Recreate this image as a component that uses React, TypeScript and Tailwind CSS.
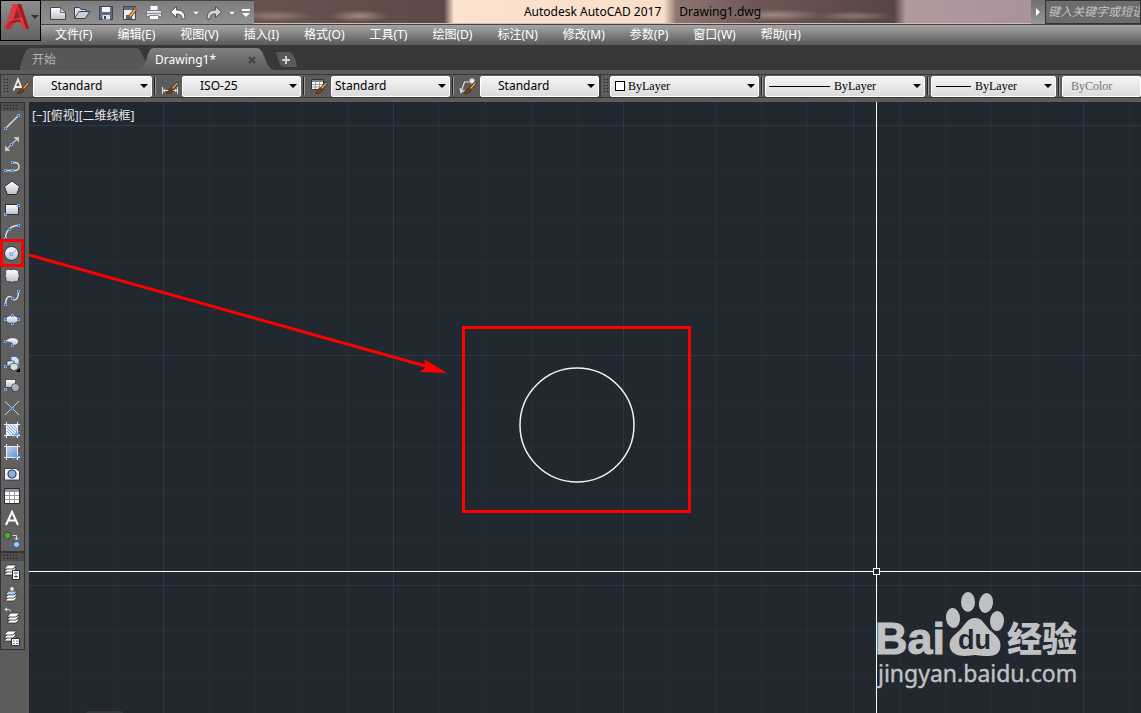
import type { ReactNode } from "react";

const BLUE = "#6ea8f5";
const INK = "#2c2c2c";

type Tool = {
  label: string;
  icon: ReactNode;
  highlighted?: boolean;
};

type StyleSelectProps = {
  label: string;
  value: string;
  className: string;
  selectClassName?: string;
  children?: ReactNode;
  disabled?: boolean;
};

// Small square grip point used by most of the draw icons
function Node({ x, y }: { x: number; y: number }) {
  return <rect x={x - 1} y={y - 1} width="2" height="2" fill="#27406b" stroke={BLUE} />;
}

function Icon({ children, className = "h-4 w-4" }: { children: ReactNode; className?: string }) {
  return (
    <svg viewBox="0 0 16 16" className={`shrink-0 overflow-visible ${className}`} fill="none" aria-hidden="true">
      {children}
    </svg>
  );
}

function Sheets({ x = 0, y = 0, top = "#fff" }: { x?: number; y?: number; top?: string }) {
  return (
    <g transform={`translate(${x} ${y})`} stroke={INK} strokeWidth=".8">
      <path d="M0 12 3.500 8H12.500L9 12Z" fill="#fff" />
      <path d="M0 9 3.500 5H12.500L9 9Z" fill="#fff" />
      <path d="M0 6 3.500 2H12.500L9 6Z" fill={top} />
    </g>
  );
}

function Brush() {
  return (
    <g>
      <path d="m10.500 10.500 4.500-5" stroke="#3a2a1a" strokeWidth="3" strokeLinecap="round" />
      <path d="m10.500 10.500 4.500-5" stroke="#f3a63c" strokeWidth="1.600" strokeLinecap="round" />
      <path d="M4 15c2 0 2-2 3-4 1-1.500 4-1 4 1s-2 3.500-4.500 3.500Z" fill="#7a3d12" stroke="#4a240a" strokeWidth=".600" />
    </g>
  );
}

const drawTools: Tool[] = [
  { label: "直线", icon: <><path d="M2 14 14 2" stroke="#e6e6e6" strokeWidth="1.200" /><Node x={1.5} y={14.5} /><Node x={14.5} y={1.5} /></> },
  { label: "构造线", icon: <><path d="M3 13 13 3" stroke="#c4c4c4" strokeWidth="1.200" /><path d="M9.500 1H15v5.500ZM1 9.500V15h5.500Z" fill="#c9c9c9" /><Node x={7.5} y={8.5} /></> },
  { label: "多段线", icon: <><path d="M2 12.500H11C16.500 12.500 16.500 4.500 10 4.500H9" stroke="#dcdcdc" strokeWidth="1.400" /><Node x={1.5} y={12.5} /><Node x={8.5} y={12.5} /><Node x={8.5} y={4.5} /></> },
  { label: "多边形", icon: <path d="M8 1 15.500 6.500 12.800 14.500H3.200L.500 6.500Z" fill="url(#metal)" stroke={INK} /> },
  { label: "矩形", icon: <><path d="M1.500 2.500h13v10h-13Z" fill="url(#metal)" stroke={INK} /><Node x={1.5} y={12.5} /><Node x={14.5} y={3.5} /></> },
  { label: "圆弧", icon: <><path d="M1.500 14C1.500 7 7 1.800 14 1.500" stroke="#dcdcdc" strokeWidth="1.400" /><Node x={1.5} y={14.5} /><Node x={5.5} y={5.5} /><Node x={14.5} y={1.5} /></> },
  { label: "圆", highlighted: true, icon: <><circle cx="7.500" cy="7.500" r="7" fill="url(#metal)" stroke={INK} /><path d="m8 8 4-4" stroke={BLUE} /><rect x="6" y="7" width="2.500" height="2.500" stroke={BLUE} /></> },
  { label: "修订云线", icon: <path d="M2.500 2C4 .800 6 1 7 2c2-1 4-1 5 0 2-.500 3.500 1.500 2.500 3.500 1 1.500 1 3 0 4.500.500 3-2 4.500-4 3.500-2 1-3.500 1-4.500 0-2.500 1-5-1-4-3.500C.800 8 1 6.500 2 5.500 1 4 1.200 3 2.500 2Z" fill="url(#metal)" stroke={INK} strokeWidth=".800" /> },
  { label: "样条曲线", icon: <><path d="M1.500 14C2 6 6 5 8 8s6 3 6.500-6" stroke="#e6e6e6" strokeWidth="1.400" /><Node x={1.5} y={14.5} /><Node x={8.5} y={8.5} /><Node x={14.5} y={1.5} /></> },
  { label: "椭圆", icon: <><ellipse cx="8" cy="7.500" rx="6.500" ry="4" fill="url(#metal)" stroke={INK} strokeWidth=".600" /><Node x={1.5} y={7.5} /><Node x={8.5} y={3.5} /><Node x={14.5} y={7.5} /><Node x={8.5} y={11.5} /></> },
  { label: "椭圆弧", icon: <><path d="M2 7.500C3 2.500 14.500 2.500 14.500 7.500c0 4-5 4-6.500 4V9L2 7.500Z" fill="url(#metal)" stroke={INK} strokeWidth=".600" /><Node x={1.5} y={7.5} /><Node x={8.5} y={11.5} /></> },
  { label: "插入块", icon: <><path d="M7 .500h5l3 3V12H7Z" fill="#cfe2f7" stroke="#3c6ba6" strokeWidth=".800" /><path d="M3 5h7v5H3Z" fill="url(#metal)" stroke={INK} strokeWidth=".700" /><path d="M6 8.500 10 7l4 1.500v4L10 15l-4-2.500Z" fill="#d9dde4" stroke={INK} strokeWidth=".700" /><path d="M16 12v4h-4Z" fill="#000" /><Node x={1.5} y={10.5} /></> },
  { label: "创建块", icon: <><path d="M1.500 1.500h10v8h-10Z" fill="url(#metal)" stroke={INK} strokeWidth=".700" /><circle cx="11.500" cy="9.500" r="4" fill="#b7bdc8" fillOpacity=".850" stroke={INK} strokeWidth=".700" /><Node x={1.5} y={11.5} /></> },
  { label: "点", icon: <><path d="M1 1.500 15 15M15 1 1 15" stroke="#cfcfcf" /><Node x={8.5} y={8.5} /></> },
  { label: "图案填充", icon: <><path d="M3 3h10v10H3Z" fill="#e6eefa" /><path d="M3 9l4 4M3 6l7 7M3 3l10 10M6 3l7 7M9 3l4 4" stroke="#6a94d0" strokeWidth=".800" /><path d="M0 2.500h16M0 13.500h16M2.500 0v16M13.500 0v16" stroke="#f0f0f0" /><path d="m8.500 16 7-7M12.500 8v7.500M8 12.500h8" stroke={BLUE} /></> },
  { label: "渐变色", icon: <><path d="M3 3h10v10H3Z" fill="url(#sky)" /><path d="M0 2.500h16M0 13.500h16M2.500 0v16M13.500 0v16" stroke="#f0f0f0" /><path d="m8.500 16 7-7M12.500 8v7.500M8 12.500h8" stroke={BLUE} /></> },
  { label: "面域", icon: <><path d="M.500 2.500H12l3.500 3v8.500H.500Z" fill="#eef0f3" stroke={INK} strokeWidth=".800" /><circle cx="8" cy="8" r="4" fill="#8fb1de" stroke="#25436f" strokeWidth="1.200" /></> },
  { label: "表格", icon: <><path d="M.500.500h15v15H.500Z" fill="#fff" stroke={INK} /><path d="M1 1h14v3H1Z" fill="#8a94a2" /><path d="M1 7.500h14M1 11.500h14M5.500 4v11M10.500 4v11" stroke="#9a9a9a" /></> },
  { label: "多行文字", icon: <path d="M2 15 8 2l6 13M4 10.500h8" stroke="#fff" strokeWidth="2" /> },
  { label: "添加选定对象", icon: <><circle cx="3.500" cy="3.500" r="3.300" fill="#55a63a" stroke="#24571a" /><path d="M8.500 3.500h4v4M10.500 6l2 2 2-2" stroke="#dcdcdc" /><circle cx="12.500" cy="12.500" r="3" fill="#9fcbf5" stroke="#2c5c94" /></> },
];

const layerTools: Tool[] = [
  { label: "图层特性管理器", icon: <><Sheets x={0} y={-1} /><path d="M8.500 6.500h7v9h-7Z" fill="#fff" stroke={INK} /><path d="M10 8h4v2h-4Z" fill={BLUE} /><path d="M10 12.500h4M12 11v3" stroke="#555" /></> },
  { label: "将对象的图层置为当前", icon: <><Sheets x={1} y={3} top="#a8cbf2" /><circle cx="8" cy="3" r="2.200" fill="#e6e6e6" stroke="#666" strokeWidth=".600" /></> },
  { label: "上一个图层", icon: <><Sheets x={3} y={3} /><path d="M1 1.500h3.500c1 0 2 .500 2 2M3 0 1 1.500 3 3.500" stroke="#e6e6e6" /></> },
  { label: "图层状态管理器", icon: <><Sheets x={0} y={-1} /><path d="M7.500 8.500h8v7h-8Z" fill="#fff" stroke={INK} /><path d="M9 11h2M12 11h2.500M9 13.500h2M12 13.500h2.500" stroke="#6a7fb0" /></> },
];

const menus = [
  "文件(F)", "编辑(E)", "视图(V)", "插入(I)", "格式(O)", "工具(T)",
  "绘图(D)", "标注(N)", "修改(M)", "参数(P)", "窗口(W)", "帮助(H)",
];

const quickTools: Tool[] = [
  { label: "新建", icon: <><path d="M.500 2.500h10l5 5v7H.500Z" fill="url(#metal)" stroke="#444" /><path d="M10.500 2.500v5h5Z" fill="#d0d4da" stroke="#555" strokeWidth=".800" /></> },
  { label: "打开", icon: <><path d="M.500 13V2.500h5L7 4.500h5v3" fill="#dfe3e8" stroke="#39424f" /><path d="m.500 13.500 4.500-7H16l-5 7Z" fill="#c8d0da" stroke="#39424f" /></> },
  { label: "保存", icon: <><path d="M1.500 1.500h13v13h-13Z" fill="#5e6b7c" stroke="#3b4450" /><path d="M4 2h8v5H4Z" fill="#f4f4f4" /><path d="M4.500 10H12v4.500H4.500Z" fill="#e2e5e9" /><path d="M6 11h2v3H6Z" fill="#3b4450" /></> },
  { label: "另存为", icon: <><path d="M1.500 1.500h12v13h-12Z" fill="#e9ebee" stroke="#3b4450" /><path d="M2 2h11v3H2Z" fill="#5e6b7c" /><path d="M4 10h6v4H4Z" fill="#59616c" /><path d="m8 11.500 6-8" stroke="#4a3517" strokeWidth="3.500" /><path d="m8 11.500 6-8" stroke="#f4b23f" strokeWidth="2" /><path d="m12.800 5 1.600-2" stroke="#d7563c" strokeWidth="2.500" /></> },
  { label: "打印", icon: <><path d="M4 .500h8V6H4Z" fill="#fff" stroke="#888" /><path d="M.500 5.500h15v6H.500Z" fill="#e9ebee" stroke="#777" /><path d="M1 8.500h14" stroke="#8c99a8" strokeWidth="1.500" /><path d="M3.500 10.500h9v4h-9Z" fill="#fff" stroke="#888" /></> },
  { label: "放弃", icon: <path d="M.500 7 6.500 1.500v3.500c6 0 8.500 3 8.500 9h-3c0-4-1.500-5-5.500-5v3.500Z" fill="#fafafa" stroke="#505050" /> },
];

// Caret shared by split buttons and drop-downs
function Caret({ className }: { className: string }) {
  return (
    <svg viewBox="0 0 8 4" className={`pointer-events-none h-1 w-2 shrink-0 ${className}`} fill="currentColor" aria-hidden="true">
      <path d="M0 0h8L4 4Z" />
    </svg>
  );
}

function StyleSelect({ label, value, className, selectClassName = "", children, disabled }: StyleSelectProps) {
  return (
    <div className={`flex h-[21px] items-center rounded-xs border border-white bg-linear-to-b from-[#f4f4f4] to-[#dcdcdc] ${className}`}>
      {children}
      <div className="relative flex h-full min-w-0 flex-1 items-center">
        <select aria-label={label} disabled={disabled} className={`h-full w-full appearance-none bg-transparent text-black outline-none disabled:text-[#777] ${selectClassName}`}>
          <option>{value}</option>
        </select>
        {!disabled && <Caret className="absolute right-[3px] text-black" />}
      </div>
    </div>
  );
}

function Separator() {
  return <div className="mx-0.5 h-4.5 w-0.5 border-l border-[#222] bg-[#9a9a9a]" />;
}

function Grip({ className }: { className: string }) {
  return <div className={`bg-[radial-gradient(#1e1e1e_1px,transparent_1px)] bg-[length:3px_3px] ${className}`} />;
}

function StyleIcon({ children }: { children: ReactNode }) {
  return (
    <div className="flex w-6 justify-center">
      <Icon>
        {children}
        <Brush />
      </Icon>
    </div>
  );
}

function TitleBar() {
  return (
    <div className="flex h-[25px] border-b border-[#444]">
      <div className="flex w-[213px] items-center border-t border-[#444] bg-linear-to-b from-[#7d7d7d] to-[#919191] pl-[5px]">
        {quickTools.map((tool) => (
          <button key={tool.label} aria-label={tool.label} className="flex w-6 justify-center">
            <Icon>{tool.icon}</Icon>
          </button>
        ))}
        <button aria-label="放弃列表" className="flex w-3 justify-center">
          <Caret className="scale-75 text-white" />
        </button>
        <button aria-label="重做" className="flex w-6 justify-center">
          <Icon>
            <path d="M15.500 7 9.500 1.500v3.500C3.500 5 1 8 1 14h3c0-4 1.500-5 5.500-5v3.500Z" fill="#d6d6d6" stroke="#505050" />
          </Icon>
        </button>
        <button aria-label="重做列表" className="flex w-3 justify-center">
          <Caret className="scale-75 text-white" />
        </button>
        <button aria-label="自定义快速访问工具栏" className="flex flex-1 flex-col items-center gap-0.5">
          <span className="h-0.5 w-2 bg-white" />
          <Caret className="text-white" />
        </button>
      </div>
      <h1 className="flex min-w-0 flex-1 items-center justify-center gap-4.5 border-b border-[#d2bdb2] bg-[radial-gradient(30px_6px_at_105px_16px,#a18a80,transparent),radial-gradient(40px_6px_at_20px_16px,#927c73,transparent),radial-gradient(50px_6px_at_520px_15px,#a08981,transparent),radial-gradient(40px_5px_at_600px_16px,#8e7770,transparent),linear-gradient(90deg,#67534e_0,#5d4a48_190px,#fbe3d0_200px,#f8dfcb_410px,#8e7771_422px,#6d5754_500px,#554545_640px,#b09a9e_652px,#a9939a_100%)] text-xs whitespace-nowrap text-black">
        <span>Autodesk AutoCAD 2017</span>
        <span>Drawing1.dwg</span>
      </h1>
      <button aria-label="展开搜索" className="flex w-3.5 items-center justify-center bg-linear-to-b from-[#707070] to-[#979797]">
        <svg viewBox="0 0 4 8" className="h-2 w-1" fill="#fff" aria-hidden="true">
          <path d="M0 0v8l4-4Z" />
        </svg>
      </button>
      <input
        aria-label="搜索"
        placeholder="键入关键字或短语"
        className="w-24 border border-[#333] bg-[#6c6c6c] pl-0.5 text-xs text-white italic outline-none placeholder:text-[#c4c4c4]"
      />
    </div>
  );
}

function Header() {
  return (
    <header className="flex bg-[#626262]">
      <button aria-label="应用程序菜单" className="flex h-[41px] w-[41px] shrink-0 items-center border border-black bg-linear-to-b from-[#8e8e8e] to-[#626262] pb-2 pl-1">
        <svg viewBox="0 0 24 28" className="h-7 w-6 shrink-0" aria-hidden="true">
          <path d="M0 26 8 1h8l8 25h-6l-2-6.500C12 18 8 20 5 26Z" fill="#c9252c" />
          <path d="M8 1h5L8 16l10-2 5.500 12h-5.500l-2-6.500C11 17.500 6 19 0 26Z" fill="#dd3a41" />
          <path d="m12 7 2.500 7.500-5.500 1.500Z" fill="#86282c" />
          <path d="M13 1h3l8 25h-3Z" fill="#a3191f" />
          <path d="M0 26c3-5 8-8 16-6.500l-1-3C8 16 3 19 0 26Z" fill="#a81a21" />
        </svg>
        <Caret className="ml-0.5 text-[#2c333d]" />
      </button>
      <div className="min-w-0 flex-1">
        <TitleBar />
        <nav className="flex h-5 items-center gap-[25px] bg-linear-to-b from-[#a6a6a6] to-[#5a5a5a] pl-3.5 text-xs whitespace-nowrap text-white">
          {menus.map((menu) => (
            <button key={menu}>{menu}</button>
          ))}
        </nav>
      </div>
    </header>
  );
}

function FileTabs() {
  return (
    <div className="flex h-[25px] items-end bg-[#383838] pl-5 text-xs">
      <button className="relative h-[22px] w-[126px] pt-0.5 pl-3 text-left text-[#b4b4b4]">
        <svg viewBox="0 0 128 22" className="absolute inset-0 h-full w-full" preserveAspectRatio="none" aria-hidden="true">
          <path d="M-4 22C4 20 1 0 12 0H116c8 0 8 8 12 14v8Z" fill="#575757" />
        </svg>
        <span className="relative">开始</span>
      </button>
      <div className="relative flex h-[22px] w-[124px] items-center pt-0.5 pl-[9px]">
        <svg viewBox="0 0 124 22" className="absolute inset-0 h-full w-full overflow-visible" aria-hidden="true">
          <path d="M-8 22C3 20-1 0 8 0H110c10 0 7 18 18 22Z" fill="url(#tab)" />
        </svg>
        <button className="relative text-white">Drawing1*</button>
        <button aria-label="关闭" className="relative ml-auto pr-3.5">
          <svg viewBox="0 0 8 8" className="h-2 w-2" stroke="#444" strokeWidth="2" aria-hidden="true">
            <path d="m1 1 6 6M7 1 1 7" />
          </svg>
        </button>
      </div>
      <button aria-label="新图形" className="mb-0.5 ml-1">
        <svg viewBox="0 0 24 16" className="h-4 w-6" aria-hidden="true">
          <path d="M2 0h12c6 0 8 8 9 15H10C4 15 4 4 2 0Z" fill="#595959" />
          <path d="M8 8h8M12 4v8" stroke="#cfcfcf" strokeWidth="2" />
        </svg>
      </button>
    </div>
  );
}

function StylesBar() {
  return (
    <div className="flex h-8 items-center overflow-hidden bg-[#5c5c5c] text-xs">
      <div className="flex h-6 shrink-0 items-center border border-[#383838]">
        <Grip className="ml-0.5 h-4 w-1.5" />
        <StyleIcon>
          <path d="M.500 12.500 5 1.500l4.500 11M2 9h6" stroke="#ececec" strokeWidth="1.800" />
        </StyleIcon>
        <StyleSelect label="文字样式" value="Standard" className="w-[119px]" selectClassName="pl-[17px]" />
        <Separator />
        <StyleIcon>
          <path d="M.500 9v7M15.500 9v7M1 12.500h14M3 11l-2 1.500L3 14M13 11l2 1.500-2 1.500" stroke="#e0e0e0" />
        </StyleIcon>
        <StyleSelect label="标注样式" value="ISO-25" className="w-[119px]" selectClassName="pl-[17px]" />
        <Separator />
        <StyleIcon>
          <path d="M.500 1.500h12v10H.500Z" fill="#fff" stroke="#333" />
          <path d="M1 3h11" stroke="#7c8796" strokeWidth="2" />
          <path d="M1 6.500h11M1 9h11M4.500 4v7M8.500 4v7" stroke="#999" />
        </StyleIcon>
        <StyleSelect label="表格样式" value="Standard" className="w-[119px]" selectClassName="pl-[3px]" />
        <Separator />
        <StyleIcon>
          <path d="M1 14 4.500 4H9M0 10l1 4.500L4.500 12" stroke="#e0e0e0" strokeWidth="1.200" />
          <circle cx="12" cy="3" r="2.800" fill="#e8e8e8" stroke="#777" strokeWidth=".600" />
        </StyleIcon>
        <StyleSelect label="多重引线样式" value="Standard" className="w-[119px]" selectClassName="pl-[17px]" />
      </div>
      <div className="flex h-6 min-w-0 flex-1 items-center border-y border-l border-[#383838] font-['Liberation_Serif','Noto_Sans_CJK_SC',serif]">
        <Grip className="mr-px ml-0.5 h-4 w-1.5 shrink-0" />
        <StyleSelect label="颜色" value="ByLayer" className="w-[149px] shrink-0" selectClassName="pl-[3px]">
          <span className="ml-1 h-2.5 w-2.5 border border-black bg-white" />
        </StyleSelect>
        <Separator />
        <StyleSelect label="线型" value="ByLayer" className="w-40 shrink-0" selectClassName="pl-1">
          <span className="ml-[3px] h-px w-[61px] bg-black" />
        </StyleSelect>
        <Separator />
        <StyleSelect label="线宽" value="ByLayer" className="w-[125px] shrink-0" selectClassName="pl-1">
          <span className="ml-1 h-px w-[35px] bg-black" />
        </StyleSelect>
        <Separator />
        <StyleSelect label="打印样式" value="ByColor" className="flex-1" selectClassName="pl-2" disabled />
      </div>
    </div>
  );
}

function ToolPanel({ tools, label }: { tools: Tool[]; label: string }) {
  return (
    <div role="toolbar" aria-label={label} className="w-[25px] border border-[#333] bg-[#606060]">
      <div className="flex h-2 items-center bg-[#4c4c4c] pl-0.5">
        <Grip className="h-1.5 w-3.5" />
      </div>
      {tools.map((tool) => (
        <button key={tool.label} aria-label={tool.label} className="relative flex h-[22px] w-full items-center pl-[3px]">
          <Icon>{tool.icon}</Icon>
          {tool.highlighted && <span className="absolute -top-1 right-0 -bottom-0.5 -left-px border-3 border-[#f00]" />}
        </button>
      ))}
    </div>
  );
}

function Watermark() {
  return (
    <svg viewBox="0 0 210 105" className="absolute top-[486px] left-[845px] h-[105px] w-[210px]" fill="#c0c1c3" aria-hidden="true">
      <text x="1" y="66" fontSize="45" fontWeight="700" fontFamily="Liberation Sans, sans-serif" stroke="#c0c1c3">Bai</text>
      <ellipse cx="79" cy="30" rx="7" ry="10" transform="rotate(-6 79 30)" />
      <ellipse cx="94" cy="14" rx="7" ry="10" />
      <ellipse cx="112" cy="15" rx="7" ry="10" transform="rotate(10 112 15)" />
      <ellipse cx="123" cy="33" rx="7" ry="10" transform="rotate(4 123 33)" />
      <path d="M101 30c8 0 10 8 16 13 7 6 11 10 9 18-2 8-11 8-25 6-14 2-22 1-25-7-2-8 3-12 10-18 5-5 7-12 15-12Z" />
      <text x="84" y="61" fontSize="27" fontWeight="700" fill="#222830" fontFamily="Liberation Sans, sans-serif">du</text>
      <text x="133" y="64" fontSize="35" fontWeight="900" fontFamily="Noto Sans CJK SC, sans-serif">经验</text>
      <text x="4" y="94" fontSize="23" fontFamily="Noto Sans, sans-serif" stroke="#c0c1c3" strokeWidth=".4">jingyan.baidu.com</text>
    </svg>
  );
}

function DrawingArea() {
  return (
    <main className="relative min-w-0 flex-1 overflow-hidden bg-[#222830]">
      <svg className="absolute inset-0 h-full w-full" fill="none" aria-label="Drawing1">
        <defs>
          <pattern id="minor" x="134" y="23" width="46" height="46" patternUnits="userSpaceOnUse">
            <path d="M.500 0v46M0 .500h46" stroke="#262d37" />
          </pattern>
          <pattern id="major" x="134" y="23" width="230" height="230" patternUnits="userSpaceOnUse">
            <path d="M.500 0v230M0 .500h230" stroke="#2f3644" />
          </pattern>
        </defs>
        <rect width="100%" height="100%" fill="url(#minor)" />
        <rect width="100%" height="100%" fill="url(#major)" />
        <circle cx="548" cy="323" r="57" stroke="#f2f2f2" strokeWidth="1.500" />
        <g stroke="#fff" shapeRendering="crispEdges">
          <path d="M847.500 0V466M847.500 473V2000M0 469.500H844M851 469.500H4000" />
          <rect x="844.500" y="466.500" width="6" height="6" />
        </g>
        <rect x="434.500" y="225.500" width="226" height="184" stroke="#f00" strokeWidth="3" />
        <path d="m0 153 400 112" stroke="#f00" strokeWidth="3" />
        <path d="m418 271-23-14 2 8-6 5Z" fill="#f00" />
        <rect x="57" y="609" width="37" height="8" rx="2" fill="#34383e" />
      </svg>
      <div className="relative flex pt-1.5 pl-[3px] text-xs text-[#e6e6e6]">
        <button>[−]</button>
        <button>[俯视]</button>
        <button>[二维线框]</button>
      </div>
      <Watermark />
    </main>
  );
}

export default function App() {
  return (
    <div className="flex min-h-screen flex-col bg-[#5c5c5c] font-['Noto_Sans','Noto_Sans_CJK_SC',sans-serif]">
      <svg className="absolute h-0 w-0" aria-hidden="true">
        <defs>
          <linearGradient id="metal" x1="0" y1="0" x2="0" y2="1">
            <stop offset="0" stopColor="#ffffff" />
            <stop offset="1" stopColor="#b9bfca" />
          </linearGradient>
          <linearGradient id="sky" x1="0" y1="0" x2="1" y2="1">
            <stop offset="0" stopColor="#b9d0f0" />
            <stop offset="1" stopColor="#6f96cf" />
          </linearGradient>
          <linearGradient id="tab" x1="0" y1="0" x2="0" y2="1">
            <stop offset="0" stopColor="#808080" />
            <stop offset="1" stopColor="#5c5c5c" />
          </linearGradient>
        </defs>
      </svg>
      <Header />
      <FileTabs />
      <StylesBar />
      <div className="flex flex-1">
        <aside className="w-[29px] shrink-0">
          <ToolPanel tools={drawTools} label="绘图" />
          <ToolPanel tools={layerTools} label="图层" />
        </aside>
        <DrawingArea />
      </div>
    </div>
  );
}
